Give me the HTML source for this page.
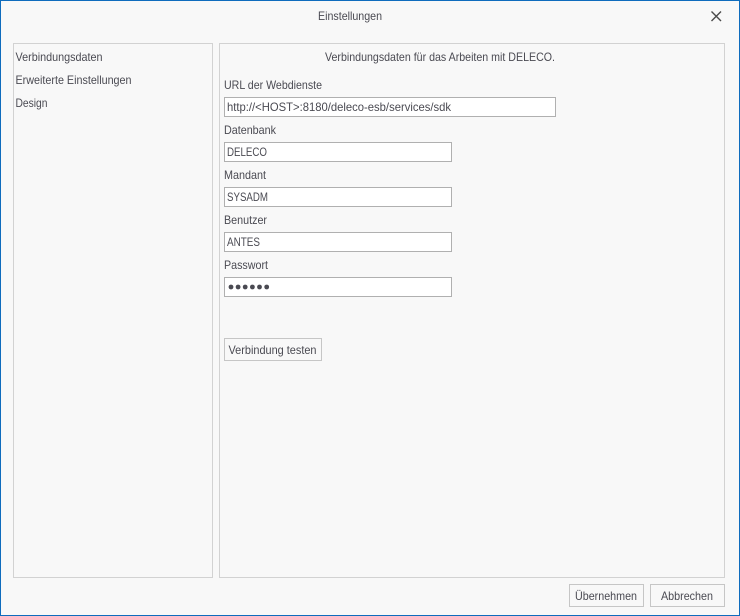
<!DOCTYPE html>
<html><head><meta charset="utf-8"><style>
html,body{margin:0;padding:0;width:740px;height:616px;overflow:hidden;background:#f8f8f8}
svg{display:block;position:absolute;left:0;top:0}
text{font-family:"Liberation Sans",sans-serif;font-size:12px;fill:#4a4a52}
div{position:absolute;box-sizing:border-box}
.o{left:0;top:0;width:740px;height:616px;border:1px solid #0f6cbd;background:#f8f8f8}
.b{border:1px solid #d2d2d2}
.i{border:1px solid #b0b0b0;background:#fff;left:224px;width:228px;height:20px}
.p{border:1px solid #c6c6c6;background:#f8f8f8;height:23px}
</style></head><body>
<div class="o"></div>
<div class="b" style="left:13px;top:43px;width:200px;height:535px"></div>
<div class="b" style="left:219px;top:43px;width:506px;height:535px"></div>
<div class="i" style="top:97px;width:332px"></div>
<div class="i" style="top:142px"></div>
<div class="i" style="top:187px"></div>
<div class="i" style="top:232px"></div>
<div class="i" style="top:277px"></div>
<div class="p" style="left:224px;top:338px;width:98px"></div>
<div class="p" style="left:569px;top:584px;width:75px"></div>
<div class="p" style="left:650px;top:584px;width:75px"></div>
<svg width="740" height="616" viewBox="0 0 740 616" xmlns="http://www.w3.org/2000/svg">
<text x="318" y="20" textLength="64" lengthAdjust="spacingAndGlyphs">Einstellungen</text>
<path d="M711.5 11.5L721 21M721 11.5L711.5 21" stroke="#4a4a4a" stroke-width="1.4" fill="none"/>
<text x="15.5" y="61" textLength="87" lengthAdjust="spacingAndGlyphs">Verbindungsdaten</text>
<text x="15.5" y="84" textLength="116" lengthAdjust="spacingAndGlyphs">Erweiterte Einstellungen</text>
<text x="15.5" y="107" textLength="32" lengthAdjust="spacingAndGlyphs">Design</text>
<text x="325" y="61" textLength="230" lengthAdjust="spacingAndGlyphs">Verbindungsdaten für das Arbeiten mit DELECO.</text>
<text x="224" y="89" textLength="98" lengthAdjust="spacingAndGlyphs">URL der Webdienste</text>
<text x="227" y="111" textLength="224" lengthAdjust="spacingAndGlyphs">http://&lt;HOST&gt;:8180/deleco-esb/services/sdk</text>
<text x="224" y="134" textLength="52" lengthAdjust="spacingAndGlyphs">Datenbank</text>
<text x="227" y="156" textLength="40" lengthAdjust="spacingAndGlyphs">DELECO</text>
<text x="224" y="179" textLength="42" lengthAdjust="spacingAndGlyphs">Mandant</text>
<text x="227" y="201" textLength="41" lengthAdjust="spacingAndGlyphs">SYSADM</text>
<text x="224" y="224" textLength="43" lengthAdjust="spacingAndGlyphs">Benutzer</text>
<text x="227" y="246" textLength="33" lengthAdjust="spacingAndGlyphs">ANTES</text>
<text x="224" y="269" textLength="44" lengthAdjust="spacingAndGlyphs">Passwort</text>
<g fill="#4a4a52">
<circle cx="231" cy="287" r="2.4"/><circle cx="238.1" cy="287" r="2.4"/><circle cx="245.2" cy="287" r="2.4"/><circle cx="252.4" cy="287" r="2.4"/><circle cx="259.5" cy="287" r="2.4"/><circle cx="266.7" cy="287" r="2.4"/>
</g>
<text x="228.5" y="354" textLength="88" lengthAdjust="spacingAndGlyphs">Verbindung testen</text>
<text x="575" y="600" textLength="62" lengthAdjust="spacingAndGlyphs">Übernehmen</text>
<text x="661" y="600" textLength="52" lengthAdjust="spacingAndGlyphs">Abbrechen</text>
</svg>
</body></html>
